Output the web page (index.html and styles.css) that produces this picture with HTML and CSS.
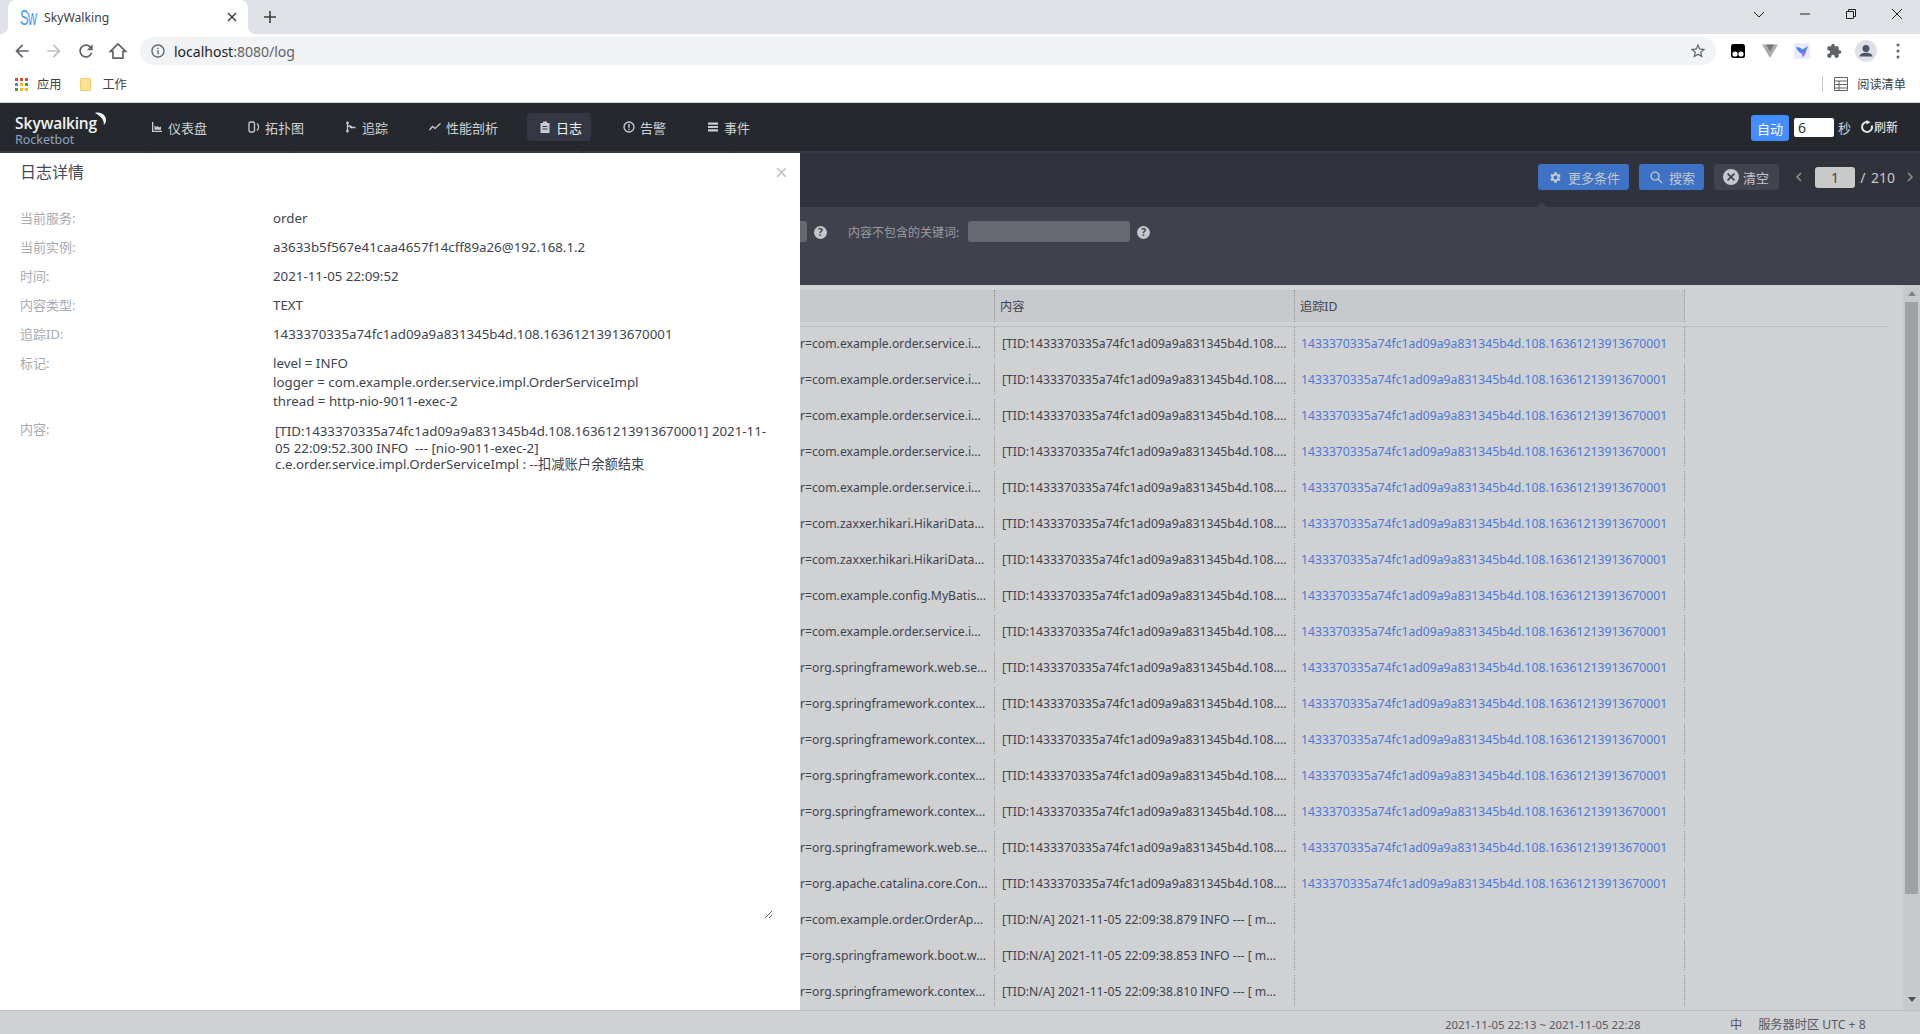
FILE: index.html
```html
<!DOCTYPE html>
<html lang="zh-CN">
<head>
  <meta charset="UTF-8" />
  <title>SkyWalking</title>
  <link rel="stylesheet" href="styles.css">
</head>
<body>
  <!-- Browser -->
  <div class="tabstrip">
    <div class="tab">
      <span class="favicon-box"><span class="favicon">Sw</span></span>
      <span class="tab-title">SkyWalking</span>
      <svg class="tab-close" viewBox="0 0 10 10"><path d="M1 1l8 8M9 1l-8 8"/></svg>
    </div>
    <svg class="new-tab" viewBox="0 0 12 12"><path d="M6 0v12M0 6h12"/></svg>
    <div class="window-btns">
      <svg viewBox="0 0 12 12"><path d="M1 4l5 5 5-5"/></svg>
      <svg viewBox="0 0 12 12"><path d="M1 6h10"/></svg>
      <svg viewBox="0 0 12 12"><path d="M1.5 3.5h7v7h-7zM3.5 3.5v-2h7v7h-2"/></svg>
      <svg viewBox="0 0 12 12"><path d="M1 1l10 10M11 1L1 11"/></svg>
    </div>
  </div>

  <div class="toolbar">
    <svg class="tool-icon" viewBox="0 0 24 24"><path d="M20 11H7.83l5.59-5.59L12 4l-8 8 8 8 1.41-1.41L7.83 13H20v-2z"/></svg>
    <svg class="tool-icon off" viewBox="0 0 24 24"><path d="M12 4l-1.41 1.41L16.17 11H4v2h12.17l-5.58 5.59L12 20l8-8z"/></svg>
    <svg class="tool-icon" viewBox="0 0 24 24"><path d="M17.65 6.35C16.2 4.9 14.21 4 12 4c-4.42 0-7.99 3.58-7.99 8s3.57 8 7.99 8c3.73 0 6.84-2.55 7.73-6h-2.08c-.82 2.33-3.04 4-5.65 4-3.31 0-6-2.69-6-6s2.69-6 6-6c1.66 0 3.14.69 4.22 1.78L13 11h7V4l-2.35 2.35z"/></svg>
    <svg class="tool-icon home" viewBox="0 0 24 24"><path d="M12 3.500L2.800 12.500H6V20.500H18V12.500H21.200z"/></svg>
    <div class="omnibox">
      <svg class="info-icon" viewBox="0 0 24 24"><path d="M11 7h2v2h-2zm0 4h2v6h-2zm1-9C6.48 2 2 6.48 2 12s4.48 10 10 10 10-4.48 10-10S17.52 2 12 2zm0 18c-4.41 0-8-3.59-8-8s3.59-8 8-8 8 3.59 8 8-3.59 8-8 8z"/></svg>
      <span class="url">localhost<span class="url-rest">:8080/log</span></span>
      <svg class="star-icon" viewBox="0 0 24 24"><path d="M22 9.24l-7.19-.62L12 2 9.19 8.63 2 9.24l5.46 4.73L5.82 21 12 17.27 18.18 21l-1.63-7.03L22 9.24zM12 15.4l-3.76 2.27 1-4.28-3.32-2.88 4.38-.38L12 6.1l1.71 4.04 4.38.38-3.32 2.88 1 4.28L12 15.4z"/></svg>
    </div>
    <div class="extensions">
      <svg viewBox="0 0 16 16"><rect x="1" y="1" width="14" height="14" rx="2.5" fill="#000"/><circle cx="5" cy="11" r="2.6" fill="#fff"/><circle cx="11" cy="11" r="2.6" fill="#fff"/></svg>
      <svg viewBox="0 0 16 16"><path d="M0 1.5h16L8 15z" fill="#a9abad"/><path d="M4 1.5h8L8 8.5z" fill="#77797c"/></svg>
      <svg viewBox="0 0 16 16"><rect width="16" height="16" rx="2" fill="#e8ebfa"/><path d="M2 4c3 .3 5 1 6.500 2.500L14 3l-2 5c-.3 3-2 5-3.500 6 .3-1.500-.2-2.500-1-3.500C5 9.500 3 7 2 4z" fill="#4d82f3"/><path d="M8 9l4-1c-.3 2.500-2 5-3.500 6 .3-1.500 0-3.500-.5-5z" fill="#a56cf0"/></svg>
      <svg viewBox="0 0 24 24"><path fill="#5f6368" d="M20.500 11H19V7c0-1.100-.9-2-2-2h-4V3.500C13 2.120 11.880 1 10.500 1S8 2.120 8 3.500V5H4c-1.100 0-1.990.9-1.990 2v3.800H3.500c1.490 0 2.700 1.210 2.700 2.700s-1.210 2.700-2.700 2.700H2V20c0 1.100.9 2 2 2h3.800v-1.500c0-1.490 1.210-2.700 2.700-2.700 1.490 0 2.700 1.210 2.700 2.700V22H17c1.100 0 2-.9 2-2v-4h1.500c1.380 0 2.500-1.120 2.500-2.500S21.880 11 20.500 11z"/></svg>
      <svg class="avatar" viewBox="0 0 22 22"><circle cx="11" cy="11" r="11" fill="#dee1e6"/><circle cx="11" cy="8.500" r="3.500" fill="#4a5568"/><path d="M4.500 16.500c0-2.500 3-3.800 6.500-3.800s6.500 1.300 6.500 3.800z" fill="#4a5568"/></svg>
      <svg class="kebab" viewBox="0 0 4 16"><circle cx="2" cy="2" r="1.500"/><circle cx="2" cy="8" r="1.500"/><circle cx="2" cy="14" r="1.500"/></svg>
    </div>
  </div>

  <div class="bookmarks">
    <svg class="apps-icon" viewBox="0 0 13 13">
      <rect width="3" height="3" fill="#ea4335"/><rect x="5" width="3" height="3" fill="#ea4335"/><rect x="10" width="3" height="3" fill="#ea4335"/>
      <rect y="5" width="3" height="3" fill="#4285f4"/><rect x="5" y="5" width="3" height="3" fill="#fbbc05"/><rect x="10" y="5" width="3" height="3" fill="#34a853"/>
      <rect y="10" width="3" height="3" fill="#34a853"/><rect x="5" y="10" width="3" height="3" fill="#fbbc05"/><rect x="10" y="10" width="3" height="3" fill="#fbbc05"/>
    </svg>
    <span class="mark">应用</span>
    <span class="folder"></span>
    <span class="mark">工作</span>
    <div class="reading-list">
      <svg viewBox="0 0 14 14"><path d="M.5.500h13v13H.5zM.5 4h13M.5 7.500h13M.5 11h13M5 4v9.500"/></svg>
      <span>阅读清单</span>
    </div>
  </div>

  <!-- Rocketbot -->
  <nav class="nav">
    <div class="logo">
      <div class="logo-name">Sky<span class="logo-tight">walking</span>
        <svg class="logo-swoosh" viewBox="0 0 14 14"><path d="M1 1c6-1.500 12 2 12 8 0 2-1 4-2.500 5 .8-5-3-10-9.500-13z"/></svg>
      </div>
      <div class="logo-sub">Rocketbot</div>
    </div>
    <a class="nav-item"><svg viewBox="0 0 12 12"><path d="M1 1h1.300V9.700H11V11H1zM3.500 8.700V4.500L5.500 6l1.500-1 1 1.500 2-1v3.200z"/></svg>仪表盘</a>
    <a class="nav-item"><svg viewBox="0 0 12 12"><path class="line" d="M2.500 1h2.500a1.500 1.500 0 011.500 1.500v7A1.500 1.500 0 015 11H2.500A1.500 1.500 0 011 9.500v-7A1.500 1.500 0 012.500 1zM9 2.500c2 2 2 5 0 7"/></svg>拓扑图</a>
    <a class="nav-item"><svg viewBox="0 0 12 12"><path class="line" d="M2.500 .5v11M2.500 5h2.500l1.500 1.500h4"/><circle cx="2.500" cy="2" r="1.300"/><circle cx="2.500" cy="10" r="1.300"/><circle cx="6" cy="6" r="1.300"/></svg>追踪</a>
    <a class="nav-item"><svg viewBox="0 0 12 12"><path class="line" d="M.5 9l3-3.500L6 7.500l5.500-5"/></svg>性能剖析</a>
    <a class="nav-item active"><svg viewBox="0 0 12 12"><path d="M4 .500h4V2h2.500v10h-9V2H4zM3.500 5v1h5V5zm0 2.500v1h5v-1z"/></svg>日志</a>
    <a class="nav-item"><svg viewBox="0 0 12 12"><circle class="line" cx="6" cy="6" r="5"/><path d="M5.300 3h1.400v3.800H5.300zM5.300 7.700h1.400V9H5.300z"/></svg>告警</a>
    <a class="nav-item"><svg viewBox="0 0 12 12"><path d="M1 1.500h10v2.200H1zM1 4.900h10v2.200H1zM1 8.300h10v2.200H1z"/></svg>事件</a>
    <div class="nav-right">
      <button class="auto-btn">自动</button>
      <span class="sec-input">6</span>
      <span class="sec-label">秒</span>
      <svg class="refresh-icon" viewBox="0 0 14 14"><path d="M7 2a5 5 0 104.800 3.500"/><path class="fill" d="M6.500 0l4 2.200-4 2.300z"/></svg>
      <span class="refresh-label">刷新</span>
    </div>
  </nav>
  <div class="nav-strip"><i></i><i></i><i></i><i></i><i></i></div>

  <div class="main">
    <div class="log-bar">
      <button class="bar-btn blue">
        <svg viewBox="0 0 24 24"><path d="M19.140 12.940c.04-.3.060-.61.060-.94s-.02-.64-.07-.94l2.030-1.580a.49.49 0 00.12-.61l-1.920-3.320a.49.49 0 00-.59-.22l-2.390.96a7 7 0 00-1.620-.94l-.36-2.540a.48.48 0 00-.48-.41h-3.840a.48.48 0 00-.47.41l-.36 2.540c-.59.24-1.130.57-1.620.94l-2.390-.96a.49.49 0 00-.59.22L2.740 8.870a.47.47 0 00.12.61l2.030 1.580c-.05.3-.09.63-.09.94s.02.64.07.94l-2.030 1.580a.49.49 0 00-.12.61l1.920 3.320c.12.22.37.29.59.22l2.390-.96c.5.380 1.030.7 1.620.94l.36 2.540c.05.24.24.41.48.41h3.840c.24 0 .44-.17.47-.41l.36-2.540c.59-.24 1.130-.56 1.620-.94l2.390.96c.22.080.47 0 .59-.22l1.920-3.320a.47.47 0 00-.12-.61l-2.010-1.580zM12 15.600a3.600 3.600 0 110-7.200 3.600 3.600 0 010 7.200z"/></svg>
        更多条件
      </button>
      <button class="bar-btn blue">
        <svg viewBox="0 0 14 14"><path class="line" d="M5.500 1.200a4.300 4.300 0 110 8.600 4.300 4.300 0 010-8.600zM8.700 8.700L13 13"/></svg>
        搜索
      </button>
      <button class="bar-btn grey">
        <svg viewBox="0 0 16 16"><path fill-rule="evenodd" d="M8 0a8 8 0 110 16A8 8 0 018 0zM5.200 4L4 5.200 6.800 8 4 10.800 5.200 12 8 9.200 10.800 12 12 10.800 9.200 8 12 5.200 10.800 4 8 6.800z"/></svg>
        清空
      </button>
      <div class="pager">
        <svg viewBox="0 0 8 12"><path d="M6 2L2 6l4 4"/></svg>
        <span class="page-input">1</span>
        <span class="page-total">/ 210</span>
        <svg viewBox="0 0 8 12"><path d="M2 2l4 4-4 4"/></svg>
      </div>
    </div>

    <div class="filter">
      <span class="filter-input stub"></span>
      <span class="help">?</span>
      <span class="filter-label">内容不包含的关键词:</span>
      <span class="filter-input"></span>
      <span class="help">?</span>
    </div>

    <div class="table-area">
      <div class="log-table">
        <div class="thead">
          <div class="th"></div>
          <div class="th">内容</div>
          <div class="th">追踪ID</div>
        </div>
        <div class="row"><div class="td tags">r=com.example.order.service.i...</div><div class="td">[TID:1433370335a74fc1ad09a9a831345b4d.108....</div><div class="td link">1433370335a74fc1ad09a9a831345b4d.108.16361213913670001</div></div>
        <div class="row"><div class="td tags">r=com.example.order.service.i...</div><div class="td">[TID:1433370335a74fc1ad09a9a831345b4d.108....</div><div class="td link">1433370335a74fc1ad09a9a831345b4d.108.16361213913670001</div></div>
        <div class="row"><div class="td tags">r=com.example.order.service.i...</div><div class="td">[TID:1433370335a74fc1ad09a9a831345b4d.108....</div><div class="td link">1433370335a74fc1ad09a9a831345b4d.108.16361213913670001</div></div>
        <div class="row"><div class="td tags">r=com.example.order.service.i...</div><div class="td">[TID:1433370335a74fc1ad09a9a831345b4d.108....</div><div class="td link">1433370335a74fc1ad09a9a831345b4d.108.16361213913670001</div></div>
        <div class="row"><div class="td tags">r=com.example.order.service.i...</div><div class="td">[TID:1433370335a74fc1ad09a9a831345b4d.108....</div><div class="td link">1433370335a74fc1ad09a9a831345b4d.108.16361213913670001</div></div>
        <div class="row"><div class="td tags">r=com.zaxxer.hikari.HikariData...</div><div class="td">[TID:1433370335a74fc1ad09a9a831345b4d.108....</div><div class="td link">1433370335a74fc1ad09a9a831345b4d.108.16361213913670001</div></div>
        <div class="row"><div class="td tags">r=com.zaxxer.hikari.HikariData...</div><div class="td">[TID:1433370335a74fc1ad09a9a831345b4d.108....</div><div class="td link">1433370335a74fc1ad09a9a831345b4d.108.16361213913670001</div></div>
        <div class="row"><div class="td tags">r=com.example.config.MyBatis...</div><div class="td">[TID:1433370335a74fc1ad09a9a831345b4d.108....</div><div class="td link">1433370335a74fc1ad09a9a831345b4d.108.16361213913670001</div></div>
        <div class="row"><div class="td tags">r=com.example.order.service.i...</div><div class="td">[TID:1433370335a74fc1ad09a9a831345b4d.108....</div><div class="td link">1433370335a74fc1ad09a9a831345b4d.108.16361213913670001</div></div>
        <div class="row"><div class="td tags">r=org.springframework.web.se...</div><div class="td">[TID:1433370335a74fc1ad09a9a831345b4d.108....</div><div class="td link">1433370335a74fc1ad09a9a831345b4d.108.16361213913670001</div></div>
        <div class="row"><div class="td tags">r=org.springframework.contex...</div><div class="td">[TID:1433370335a74fc1ad09a9a831345b4d.108....</div><div class="td link">1433370335a74fc1ad09a9a831345b4d.108.16361213913670001</div></div>
        <div class="row"><div class="td tags">r=org.springframework.contex...</div><div class="td">[TID:1433370335a74fc1ad09a9a831345b4d.108....</div><div class="td link">1433370335a74fc1ad09a9a831345b4d.108.16361213913670001</div></div>
        <div class="row"><div class="td tags">r=org.springframework.contex...</div><div class="td">[TID:1433370335a74fc1ad09a9a831345b4d.108....</div><div class="td link">1433370335a74fc1ad09a9a831345b4d.108.16361213913670001</div></div>
        <div class="row"><div class="td tags">r=org.springframework.contex...</div><div class="td">[TID:1433370335a74fc1ad09a9a831345b4d.108....</div><div class="td link">1433370335a74fc1ad09a9a831345b4d.108.16361213913670001</div></div>
        <div class="row"><div class="td tags">r=org.springframework.web.se...</div><div class="td">[TID:1433370335a74fc1ad09a9a831345b4d.108....</div><div class="td link">1433370335a74fc1ad09a9a831345b4d.108.16361213913670001</div></div>
        <div class="row"><div class="td tags">r=org.apache.catalina.core.Con...</div><div class="td">[TID:1433370335a74fc1ad09a9a831345b4d.108....</div><div class="td link">1433370335a74fc1ad09a9a831345b4d.108.16361213913670001</div></div>
        <div class="row"><div class="td tags">r=com.example.order.OrderAp...</div><div class="td">[TID:N/A] 2021-11-05 22:09:38.879 INFO --- [ m...</div><div class="td link"></div></div>
        <div class="row"><div class="td tags">r=org.springframework.boot.w...</div><div class="td">[TID:N/A] 2021-11-05 22:09:38.853 INFO --- [ m...</div><div class="td link"></div></div>
        <div class="row"><div class="td tags">r=org.springframework.contex...</div><div class="td">[TID:N/A] 2021-11-05 22:09:38.810 INFO --- [ m...</div><div class="td link"></div></div>
      </div>
      <div class="scrollbar">
        <span class="arrow up"></span>
        <span class="thumb"></span>
        <span class="arrow down"></span>
      </div>
    </div>

    <footer class="footer">
      <span class="range">2021-11-05 22:13 ~ 2021-11-05 22:28</span>
      <span class="lang">中</span>
      <span>服务器时区 UTC + 8</span>
    </footer>

    <!-- Drawer -->
    <aside class="drawer">
      <div class="drawer-head">
        <h3>日志详情</h3>
        <svg class="drawer-close" viewBox="0 0 10 10"><path d="M1 1l8 8M9 1l-8 8"/></svg>
      </div>
      <div class="detail"><span class="detail-label">当前服务:</span><span>order</span></div>
      <div class="detail"><span class="detail-label">当前实例:</span><span>a3633b5f567e41caa4657f14cff89a26@192.168.1.2</span></div>
      <div class="detail"><span class="detail-label">时间:</span><span>2021-11-05 22:09:52</span></div>
      <div class="detail"><span class="detail-label">内容类型:</span><span>TEXT</span></div>
      <div class="detail"><span class="detail-label">追踪ID:</span><span>1433370335a74fc1ad09a9a831345b4d.108.16361213913670001</span></div>
      <div class="detail tall">
        <span class="detail-label">标记:</span>
        <div class="tag-lines">
          <div>level = INFO</div>
          <div>logger = com.example.order.service.impl.OrderServiceImpl</div>
          <div>thread = http-nio-9011-exec-2</div>
        </div>
      </div>
      <div class="detail content-row">
        <span class="detail-label">内容:</span>
        <div class="content-box">[TID:1433370335a74fc1ad09a9a831345b4d.108.16361213913670001] 2021-11-<br>05 22:09:52.300 INFO &nbsp;--- [nio-9011-exec-2]<br>c.e.order.service.impl.OrderServiceImpl : --扣减账户余额结束</div>
      </div>
    </aside>
  </div>
</body>
</html>
```

FILE: styles.css
```css
* {
  box-sizing: border-box;
}

html {
  height: 1034px;
  overflow: hidden;
}

body {
  margin: 0;
  height: 1034px;
  overflow: hidden;
  display: flex;
  flex-direction: column;
  font-family: "Noto Sans", "Noto Sans CJK SC", sans-serif;
  font-size: 12.2px;
  background-color: #d0d1d3;
  color: #3d444f;
}

svg {
  display: block;
  flex: none;
}

button {
  font: inherit;
  border: none;
}

/* Browser */
.tabstrip {
  height: 34px;
  flex: none;
  display: flex;
  align-items: center;
  padding-left: 8px;
  background-color: #dee1e6;
}

.tab {
  position: relative;
  width: 240px;
  height: 34px;
  display: flex;
  align-items: center;
  padding-left: 12px;
  background-color: white;
  border-radius: 8px 8px 0 0;
}

.tab::before,
.tab::after {
  content: "";
  position: absolute;
  bottom: 0;
  width: 8px;
  height: 8px;
}

.tab::before {
  left: -8px;
  background: radial-gradient(circle at 0 0, transparent 8px, white 8px);
}

.tab::after {
  right: -8px;
  background: radial-gradient(circle at 100% 0, transparent 8px, white 8px);
}

.favicon-box {
  width: 24px;
  flex: none;
}

.favicon {
  display: inline-block;
  font-family: "Liberation Sans", sans-serif;
  font-size: 15px;
  letter-spacing: -1px;
  color: #3a9af0;
  transform: scale(.85, 1.5);
  transform-origin: left center;
}

.tab-title {
  flex: 1;
  color: #3c4043;
}

.tab-close {
  width: 10px;
  height: 10px;
  margin-right: 11px;
  fill: none;
  stroke: #3c4043;
  stroke-width: 1.5;
}

.new-tab {
  width: 12px;
  height: 12px;
  margin-left: 16px;
  fill: none;
  stroke: #3c4043;
  stroke-width: 1.6;
}

.window-btns {
  margin-left: auto;
  display: flex;
  gap: 34px;
  padding-right: 17px;
  margin-top: -6px;
}

.window-btns svg {
  width: 12px;
  height: 12px;
  fill: none;
  stroke: #222;
  stroke-width: 1;
}

.toolbar {
  height: 34px;
  flex: none;
  display: flex;
  align-items: center;
  padding-left: 12px;
  gap: 12px;
  background-color: white;
}

.tool-icon {
  width: 20px;
  height: 20px;
  fill: #5f6368;
}

.tool-icon.off {
  fill: #bdc1c6;
}

.tool-icon.home {
  fill: none;
  stroke: #5f6368;
  stroke-width: 2;
}

.omnibox {
  width: 1576px;
  height: 28px;
  display: flex;
  align-items: center;
  padding: 0 9px 0 10px;
  background-color: #f1f3f4;
  border-radius: 14px;
}

.info-icon {
  width: 16px;
  height: 16px;
  fill: #5f6368;
}

.url {
  flex: 1;
  margin-left: 8px;
  font-size: 14px;
  color: #202124;
}

.url-rest {
  color: #5f6368;
}

.star-icon {
  width: 18px;
  height: 18px;
  fill: #5f6368;
}

.extensions {
  display: flex;
  align-items: center;
  gap: 16px;
  margin-left: 2px;
}

.extensions svg {
  width: 16px;
  height: 16px;
}

.extensions .avatar {
  width: 22px;
  height: 22px;
  margin-left: -3px;
}

.extensions .kebab {
  width: 4px;
  margin-left: 3px;
  fill: #5f6368;
}

.bookmarks {
  height: 35px;
  flex: none;
  display: flex;
  align-items: center;
  padding: 0 0 2px 15px;
  background-color: white;
  border-bottom: 1px solid #d3d4d6;
}

.apps-icon {
  width: 13px;
  height: 13px;
  margin-right: 9px;
}

.mark {
  color: #3c4043;
}

.folder {
  width: 11px;
  height: 13px;
  margin: 0 11px 0 19px;
  background-color: #fde293;
  border: 1px solid #f2cf6b;
  border-radius: 1px;
}

.reading-list {
  margin-left: auto;
  display: flex;
  align-items: center;
  height: 16px;
  padding: 0 14px 0 11px;
  border-left: 1px solid #c8cacd;
  color: #3c4043;
}

.reading-list svg {
  width: 14px;
  height: 14px;
  margin-right: 9px;
  fill: none;
  stroke: #5f6368;
}

/* Rocketbot nav */
.nav {
  height: 48px;
  flex: none;
  display: flex;
  align-items: center;
  gap: 20px;
  padding-left: 15px;
  background-color: #25292e;
  color: #d0d2d6;
  font-size: 13px;
}

.logo {
  width: 104px;
  padding-top: 6px;
}

.logo-name {
  display: flex;
  align-items: flex-start;
  font-family: "Open Sans", sans-serif;
  font-size: 15.5px;
  font-weight: 600;
  line-height: 19px;
  color: #f2f3f5;
}

.logo-tight {
  letter-spacing: -.2px;
}

.logo-swoosh {
  width: 13px;
  height: 13px;
  margin: -2px 0 0 -3px;
  fill: #f2f3f5;
}

.logo-sub {
  font-size: 12.5px;
  line-height: 13px;
  color: #8da2c0;
}

.nav-item {
  height: 28px;
  display: flex;
  align-items: center;
  gap: 5px;
  padding: 0 9px 0 12px;
  border-radius: 4px;
}

.nav-item svg {
  width: 12px;
  height: 12px;
  fill: #c9ccd1;
}

.nav-item .line {
  fill: none;
  stroke: #c9ccd1;
  stroke-width: 1.3;
}

.nav-item.active {
  background-color: #333844;
  color: #f1f2f4;
}

.nav-right {
  margin-left: auto;
  display: flex;
  align-items: center;
  padding-right: 22px;
}

.auto-btn {
  width: 38px;
  height: 26px;
  margin-top: 2px;
  padding: 0;
  font-size: 13px;
  color: white;
  background-color: #448dfe;
  border-radius: 3px;
}

.sec-input {
  width: 40px;
  height: 19px;
  margin: 0 4px 0 5px;
  padding-left: 4px;
  font-size: 14px;
  line-height: 19px;
  background-color: white;
  color: #333;
  border-radius: 2px;
}

.sec-label {
  width: 22px;
}

.refresh-icon {
  width: 14px;
  height: 14px;
  fill: none;
  stroke: #e6e7ea;
  stroke-width: 2;
}

.refresh-icon .fill {
  fill: #e6e7ea;
  stroke: none;
}

.refresh-label {
  font-size: 12px;
  color: #f1f2f4;
}

.nav-strip {
  height: 2px;
  flex: none;
  display: flex;
  background-color: #373b45;
}

.nav-strip i {
  width: 146px;
  border-right: 1px solid #1f2328;
}

/* Main area, dimmed */
.main {
  position: relative;
  flex: 1;
  min-height: 0;
  display: flex;
  flex-direction: column;
}

.log-bar {
  height: 54px;
  flex: none;
  display: flex;
  justify-content: flex-end;
  align-items: center;
  gap: 10px;
  padding: 0 6px 6px 0;
  background-color: #30333c;
}

.bar-btn {
  height: 26px;
  display: flex;
  align-items: center;
  gap: 6px;
  padding: 0 9px 0 11px;
  border-radius: 3px;
  font-size: 13px;
  color: #c5c7cc;
}

.bar-btn svg {
  width: 13px;
  height: 13px;
  fill: #c5c7cc;
}

.bar-btn .line {
  fill: none;
  stroke: #c5c7cc;
  stroke-width: 1.4;
}

.bar-btn.blue {
  background-color: #3d72c4;
}

.bar-btn.grey {
  padding: 0 10px 0 9px;
  gap: 4px;
  background-color: #41444e;
}

.bar-btn.grey svg {
  width: 16px;
  height: 16px;
}

.pager {
  display: flex;
  align-items: center;
  margin-left: 6px;
  color: #c5c7cc;
}

.pager svg {
  width: 8px;
  height: 12px;
  fill: none;
  stroke: #8b8e95;
  stroke-width: 1.6;
}

.page-input {
  width: 40px;
  height: 21px;
  margin-left: 12px;
  line-height: 21px;
  text-align: center;
  font-size: 14px;
  color: #444;
  background-color: #c9c9c9;
  border-radius: 3px;
}

.page-total {
  margin: 0 11px 0 5px;
  font-size: 14px;
  word-spacing: 2px;
}

.filter {
  position: relative;
  height: 78px;
  flex: none;
  display: flex;
  align-items: flex-start;
  padding: 14px 0 0 790px;
  background-color: #3f424c;
}

.filter::before {
  content: "";
  position: absolute;
  top: -5px;
  left: 1537px;
  border: 5px solid transparent;
  border-top: none;
  border-bottom-color: #3f424c;
}

.filter-input {
  width: 162px;
  height: 21px;
  background-color: #666970;
  border-radius: 3px;
}

.filter-input.stub {
  width: 17px;
}

.help {
  width: 13px;
  height: 13px;
  margin: 5px 0 0 7px;
  border-radius: 50%;
  font-size: 10px;
  font-weight: 700;
  line-height: 13px;
  text-align: center;
  color: #3f424c;
  background-color: #c5c7cc;
}

.filter-label {
  margin: 0 9px 0 21px;
  font-size: 12px;
  line-height: 23px;
  color: #9a9ca2;
}

.table-area {
  flex: 1;
  min-height: 0;
  display: flex;
}

.log-table {
  flex: 1;
  overflow: hidden;
  padding-top: 5px;
}

.thead {
  height: 37px;
  display: grid;
  grid-template-columns: 995px 300px 390px;
  align-items: start;
  border-bottom: 1px solid #bbbcbe;
  margin-right: 15px;
}

.th {
  height: 32px;
  padding-left: 5px;
  line-height: 33px;
  background-color: #c8c9cd;
  border-right: 1px dotted #909195;
}

.row {
  height: 36px;
  display: grid;
  grid-template-columns: 995px 300px 390px;
  align-items: start;
}

.td {
  height: 31px;
  padding-left: 7px;
  line-height: 33px;
  white-space: nowrap;
  overflow: hidden;
  border-right: 1px dotted #909195;
}

.td.tags {
  padding-left: 800px;
}

.td.link {
  padding-left: 6px;
  color: #4a79d8;
}

.scrollbar {
  width: 17px;
  flex: none;
  display: flex;
  flex-direction: column;
  align-items: center;
  padding-top: 6px;
  background-color: #c8c9cb;
}

.arrow {
  border: 4px solid transparent;
}

.arrow.up {
  border-top: none;
  border-bottom: 5px solid #85868a;
}

.arrow.down {
  margin-top: 103px;
  border-bottom: none;
  border-top: 5px solid #505257;
}

.thumb {
  width: 13px;
  height: 592px;
  margin-top: 6px;
  background-color: #a0a1a3;
}

.footer {
  height: 24px;
  flex: none;
  display: flex;
  align-items: center;
  padding: 3px 0 0 1445px;
  white-space: nowrap;
  border-top: 1px solid #bbbcbe;
  color: #555a63;
}

.range {
  width: 194px;
  font-size: 11.4px;
}

.lang {
  margin: 0 16px 0 91px;
}

/* Drawer */
.drawer {
  position: absolute;
  left: 0;
  top: 0;
  bottom: 24px;
  width: 800px;
  padding: 0 20px;
  font-size: 13.3px;
  background-color: white;
  color: #3d444f;
}

.drawer-head {
  height: 45px;
  display: flex;
  align-items: center;
  justify-content: space-between;
  margin-bottom: 8px;
  padding-bottom: 10px;
}

.drawer-head h3 {
  margin: 0;
  font-size: 16px;
  font-weight: 400;
  color: #444a55;
}

.drawer-close {
  width: 11px;
  height: 11px;
  margin: 4px -7px 0 0;
  fill: none;
  stroke: #c4c5c8;
  stroke-width: 1.4;
}

.detail {
  min-height: 29px;
  display: flex;
  line-height: 19px;
  padding-top: 3px;
}

.detail-label {
  width: 253px;
  flex: none;
  font-size: 13px;
  color: #a8aab0;
}

.tag-lines {
  line-height: 19px;
  margin-bottom: 10px;
}

.content-row {
  padding-top: 0;
}

.content-row .detail-label {
  margin-top: -1px;
}

.content-box {
  width: 500px;
  height: 498px;
  padding: 2px 0 0 2px;
  line-height: 16.500px;
  overflow: auto;
  resize: both;
}
```
